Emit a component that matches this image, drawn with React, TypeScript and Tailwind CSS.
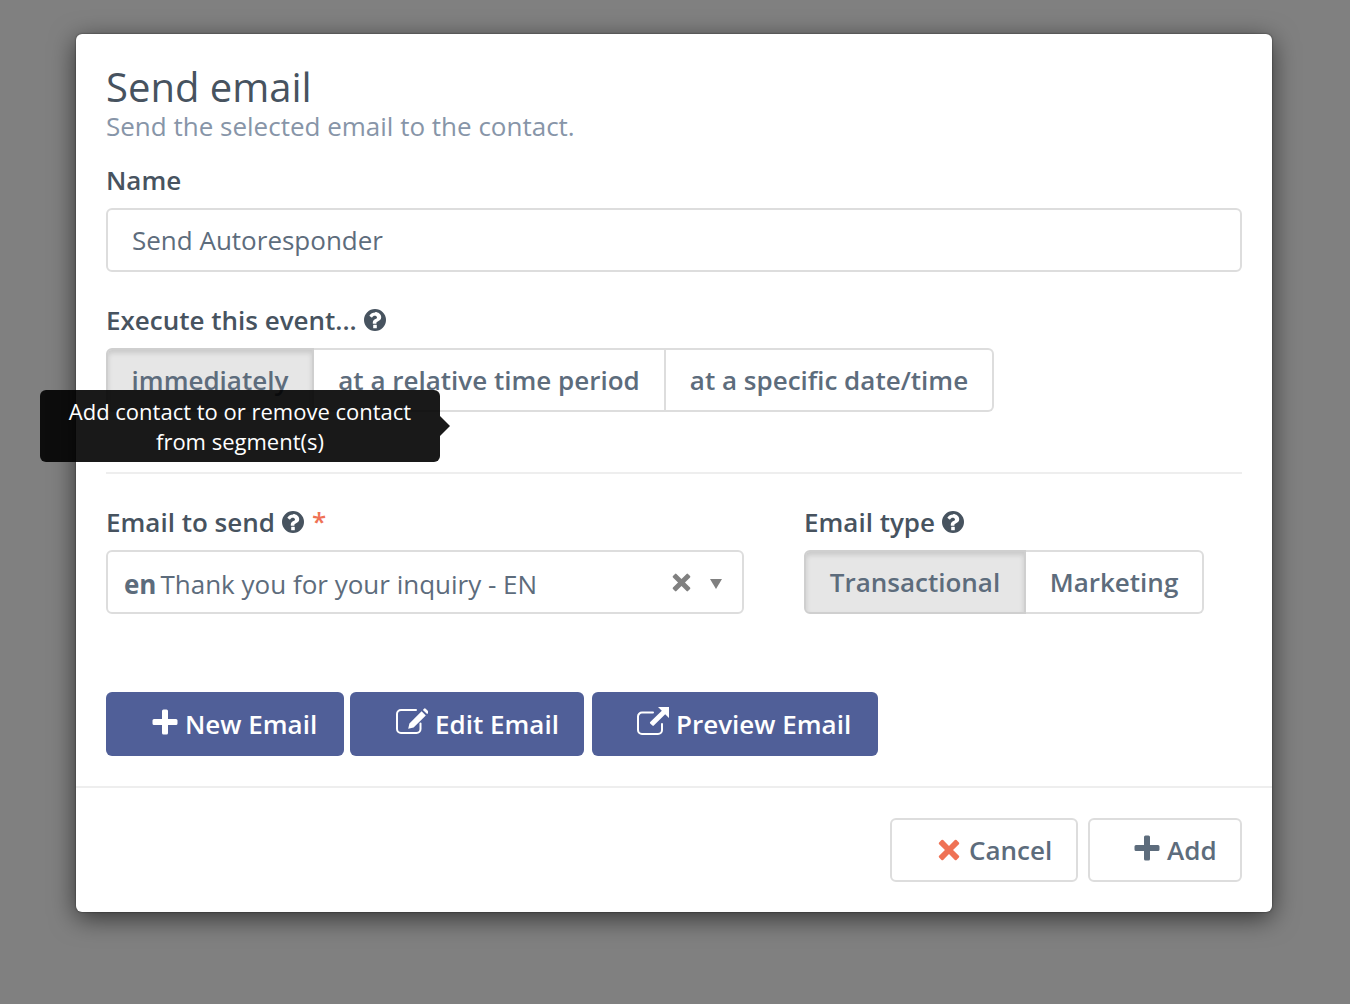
function HelpIcon() {
  return (
    <svg viewBox="1 1 22 22" className="ml-[7px] inline-block size-[22px] text-[#47535f]">
      <path
        fill="currentColor"
        fillRule="evenodd"
        d="M12 1a11 11 0 1 1 0 22 11 11 0 0 1 0-22zm-1.8 16.1v2.8a.4.4 0 0 0 .4.4h2.8a.4.4 0 0 0 .4-.4v-2.8a.4.4 0 0 0-.4-.4h-2.8a.4.4 0 0 0-.4.4zM12.2 4.4c-2.7 0-4.4 1.2-5.7 3.1-.1.2-.1.4.1.5l1.9 1.5c.2.1.4.1.6-.1.8-1 1.4-1.6 2.7-1.6 1 0 2.2.6 2.2 1.6 0 .7-.6 1.1-1.6 1.6-1.2.6-2.6 1.5-2.6 3.4v1c0 .2.2.4.4.4h2.8c.2 0 .4-.2.4-.4 0-1.2.6-1.5 1.7-2.1 1.7-.9 3.1-2 3.1-4.1 0-3-3-5.2-6-5.2z"
      />
    </svg>
  );
}

// heavy rounded plus, as in the older icon font
function PlusIcon({ className = '' }: { className?: string }) {
  return (
    <svg viewBox="0 0 26 26" className={className}>
      <path
        fill="currentColor"
        d="M10 2a1.5 1.5 0 0 1 1.5-1.5h3A1.5 1.5 0 0 1 16 2v8h8a1.5 1.5 0 0 1 1.5 1.5v3A1.5 1.5 0 0 1 24 16h-8v8a1.5 1.5 0 0 1-1.5 1.5h-3A1.5 1.5 0 0 1 10 24v-8H2a1.5 1.5 0 0 1-1.5-1.5v-3A1.5 1.5 0 0 1 2 10h8z"
      />
    </svg>
  );
}

function CrossIcon({ className = '' }: { className?: string }) {
  return (
    <svg viewBox="0 0 24 24" className={className}>
      <path
        fill="currentColor"
        d="M1.2 5.6a1.3 1.3 0 0 1 0-1.8l2.6-2.6a1.3 1.3 0 0 1 1.8 0L12 7.6l6.4-6.4a1.3 1.3 0 0 1 1.8 0l2.6 2.6a1.3 1.3 0 0 1 0 1.8L16.4 12l6.4 6.4a1.3 1.3 0 0 1 0 1.8l-2.6 2.6a1.3 1.3 0 0 1-1.8 0L12 16.4l-6.4 6.4a1.3 1.3 0 0 1-1.8 0l-2.6-2.6a1.3 1.3 0 0 1 0-1.8L7.6 12z"
      />
    </svg>
  );
}

function EditIcon() {
  return (
    <svg viewBox="0 0 32 26" className="h-[26px] w-[32px]" fill="none">
      <path
        d="M24.5 15.5V21a4 4 0 0 1-4 4H5a4 4 0 0 1-4-4V6a4 4 0 0 1 4-4h15"
        stroke="currentColor"
        strokeWidth="2"
        strokeLinecap="round"
      />
      <path
        d="M25.6 3.2l4.2 4.2L17.6 19.6l-5.4 1.2 1.2-5.4zM26.9 1.9l1.1-1.1a1.2 1.2 0 0 1 1.7 0l2.5 2.5a1.2 1.2 0 0 1 0 1.7l-1.1 1.1z"
        fill="currentColor"
      />
    </svg>
  );
}

function ExternalIcon() {
  return (
    <svg viewBox="0 0 32 28" className="h-[28px] w-[32px]" fill="none">
      <path
        d="M25 17v6a4 4 0 0 1-4 4H5a4 4 0 0 1-4-4V9.5a4 4 0 0 1 4-4h11"
        stroke="currentColor"
        strokeWidth="2"
        strokeLinecap="round"
      />
      <path d="M21 0h11v11l-3.8-3.8-11.4 11.4a1 1 0 0 1-1.4 0l-2.2-2.2a1 1 0 0 1 0-1.4L24.8 3.8z" fill="currentColor" />
    </svg>
  );
}

function Label({ children, className = '' }: { children: React.ReactNode; className?: string }) {
  return (
    <label className={`flex h-[30px] items-center text-[26px] leading-[30px] font-semibold text-[#47535f] ${className}`}>
      {children}
    </label>
  );
}

function Toggle({ label, active, className = '' }: { label: string; active?: boolean; className?: string }) {
  return (
    <div
      className={`flex h-[64px] items-center justify-center border-2 text-[26px] font-semibold text-[#5d6c7c] ${
        active
          ? 'border-[#cfcfcf] bg-[#e6e6e6] shadow-[inset_0_3px_5px_rgba(0,0,0,0.125)]'
          : 'border-[#dddddd] bg-white'
      } ${className}`}
    >
      {label}
    </div>
  );
}

export default function App() {
  return (
    <div className="h-[1004px] w-[1350px] overflow-hidden bg-[#808080] pt-[34px] pl-[76px] font-['Open_Sans',sans-serif]">
      <div className="relative h-[878px] w-[1196px] rounded-[6px] bg-white shadow-[0_6px_26px_rgba(0,0,0,0.6),0_0_2px_rgba(0,0,0,0.6)]">
        <div className="px-[30px] pt-[29px]">
          <h1 className="text-[40px] leading-[48px] font-normal text-[#47535f]">Send email</h1>
          <p className="-mt-[1px] text-[26px] leading-[32px] text-[#8795a8]">Send the selected email to the contact.</p>

          <Label className="mt-[23px]">Name</Label>
          <div className="mt-[13px] flex h-[64px] items-center rounded-[6px] border-2 border-[#dddddd] pl-[24px] text-[26px] text-[#5d6c7c]">
            Send Autoresponder
          </div>

          <Label className="mt-[33px]">
            Execute this event...
            <HelpIcon />
          </Label>
          <div className="mt-[13px] flex">
            <Toggle label="immediately" active className="w-[208px] rounded-l-[6px]" />
            <Toggle label="at a relative time period" className="w-[352px] border-l-0" />
            <Toggle label="at a specific date/time" className="w-[328px] rounded-r-[6px] border-l-0" />
          </div>

          <hr className="mt-[60px] border-t-2 border-[#eeeeee]" />

          <div className="mt-[33px] flex">
            <div className="w-[638px]">
              <Label>
                Email to send
                <HelpIcon />
                <span className="-mt-[3px] ml-[8px] text-[#ef7255]">*</span>
              </Label>
              <div className="mt-[13px] flex h-[64px] items-center rounded-[6px] border-2 border-[#dddddd] pt-[4px] pl-[16px] text-[26px] text-[#5d6c7c]">
                <span className="font-bold">en</span>
                <span className="ml-[4px]">Thank you for your inquiry - EN</span>
                <CrossIcon className="-mt-[4px] ml-auto size-[19px] text-[#808080]" />
                <svg viewBox="0 0 12 10" className="mr-[20px] ml-[19px] h-[10px] w-[12px] text-[#808080]">
                  <path fill="currentColor" d="M0 0h12L6 10z" />
                </svg>
              </div>
            </div>
            <div className="ml-[60px]">
              <Label>
                Email type
                <HelpIcon />
              </Label>
              <div className="mt-[13px] flex">
                <Toggle label="Transactional" active className="w-[222px] rounded-l-[6px]" />
                <Toggle label="Marketing" className="w-[178px] rounded-r-[6px] border-l-0" />
              </div>
            </div>
          </div>

          <div className="mt-[78px] flex">
            <button className="flex h-[64px] w-[238px] items-center rounded-[6px] bg-[#505f98] pl-[46px] text-[26px] font-semibold text-white">
              <PlusIcon className="-mt-[4px] size-[26px]" />
              <span className="ml-[7px]">New Email</span>
            </button>
            <button className="ml-[6px] flex h-[64px] w-[234px] items-center rounded-[6px] bg-[#505f98] pl-[46px] text-[26px] font-semibold text-white">
              <span className="-mt-[6px]">
                <EditIcon />
              </span>
              <span className="ml-[7px]">Edit Email</span>
            </button>
            <button className="ml-[8px] flex h-[64px] w-[286px] items-center rounded-[6px] bg-[#505f98] pl-[45px] text-[26px] font-semibold text-white">
              <span className="-mt-[6px]">
                <ExternalIcon />
              </span>
              <span className="ml-[7px]">Preview Email</span>
            </button>
          </div>
        </div>

        <hr className="mt-[30px] border-t-2 border-[#eeeeee]" />

        <div className="mt-[30px] flex justify-end pr-[30px]">
          <button className="flex h-[64px] w-[188px] items-center rounded-[6px] border-2 border-[#dddddd] pl-[46px] text-[26px] font-semibold text-[#5d6c7c]">
            <CrossIcon className="size-[22px] text-[#ef7255]" />
            <span className="ml-[9px]">Cancel</span>
          </button>
          <button className="ml-[10px] flex h-[64px] w-[154px] items-center rounded-[6px] border-2 border-[#dddddd] pl-[44px] text-[26px] font-semibold text-[#5d6c7c]">
            <PlusIcon className="-mt-[4px] size-[26px]" />
            <span className="ml-[7px]">Add</span>
          </button>
        </div>

        <div className="absolute top-[356px] -left-[36px] w-[400px] rounded-[6px] bg-black/90 px-[10px] pt-[6px] pb-[6px] text-center text-[22px] leading-[30px] text-white">
          Add contact to or remove contact from segment(s)
          <div className="absolute top-1/2 -right-[10px] h-0 w-0 -translate-y-1/2 border-y-[10px] border-l-[10px] border-y-transparent border-l-black/90" />
        </div>
      </div>
    </div>
  );
}
